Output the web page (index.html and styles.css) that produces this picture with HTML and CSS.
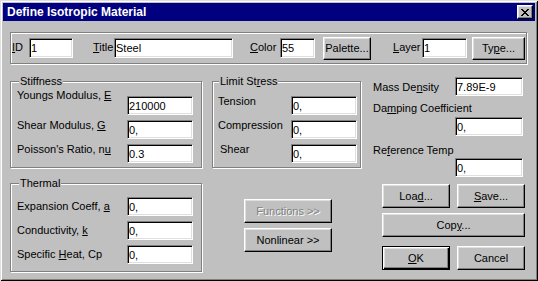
FILE: index.html
```html
<!DOCTYPE html>
<html lang="en">
<head>
    <meta charset="UTF-8">
    <title>Define Isotropic Material</title>
    <link rel="stylesheet" href="styles.css">
</head>
<body>

    <div class="window">

        <div class="titlebar">
            <span>Define Isotropic Material</span>
            <button class="close">
                <svg width="8" height="7" viewBox="0 0 8 7" shape-rendering="crispEdges">
                    <path d="M0 0h2v1h-2zM6 0h2v1h-2zM1 1h2v1h-2zM5 1h2v1h-2zM2 2h4v1h-4zM3 3h2v1h-2zM2 4h4v1h-4zM1 5h2v1h-2zM5 5h2v1h-2zM0 6h2v1h-2zM6 6h2v1h-2z" fill="#000"/>
                </svg>
            </button>
        </div>

        <div class="content">

            <div class="group top-group">
                <span class="lbl l-id"><u>I</u>D</span>
                <input class="field f-id" value="1">
                <span class="lbl l-title"><u>T</u>itle</span>
                <input class="field f-title" value="Steel">
                <span class="lbl l-color"><u>C</u>olor</span>
                <input class="field f-color" value="55">
                <button class="btn b-palette">Palette...</button>
                <span class="lbl l-layer"><u>L</u>ayer</span>
                <input class="field f-layer" value="1">
                <button class="btn b-type">Ty<u>p</u>e...</button>
            </div>

            <div class="lower">

                <div class="col-left">
                    <div class="group stiffness">
                        <div class="legend">Stiffness</div>
                        <div class="rows">
                            <span class="lbl up">Youngs Modulus, <u>E</u></span>
                            <input class="field" value="210000">
                            <span class="lbl">Shear Modulus, <u>G</u></span>
                            <input class="field" value="0,">
                            <span class="lbl">Poisson's Ratio, n<u>u</u></span>
                            <input class="field" value="0.3">
                        </div>
                    </div>

                    <div class="group thermal">
                        <div class="legend">Thermal</div>
                        <div class="rows">
                            <span class="lbl">Expansion Coeff, <u>a</u></span>
                            <input class="field" value="0,">
                            <span class="lbl">Conductivity, <u>k</u></span>
                            <input class="field" value="0,">
                            <span class="lbl">Specific <u>H</u>eat, Cp</span>
                            <input class="field" value="0,">
                        </div>
                    </div>
                </div>

                <div class="col-mid">
                    <div class="group limit">
                        <div class="legend">Limit St<u>r</u>ess</div>
                        <div class="rows">
                            <span class="lbl">Tension</span>
                            <input class="field" value="0,">
                            <span class="lbl">Compression</span>
                            <input class="field" value="0,">
                            <span class="lbl shear">Shear</span>
                            <input class="field" value="0,">
                        </div>
                    </div>
                    <button class="btn wide disabled">Functions &gt;&gt;</button>
                    <button class="btn wide">Nonlinear &gt;&gt;</button>
                </div>

                <div class="col-right">
                    <div class="mass-row">
                        <span>Mass De<u>n</u>sity</span>
                        <input class="field r-field" value="7.89E-9">
                    </div>
                    <span class="r-lbl">Da<u>m</u>ping Coefficient</span>
                    <input class="field r-field damp" value="0,">
                    <span class="r-lbl ref">Re<u>f</u>erence Temp</span>
                    <input class="field r-field temp" value="0,">

                    <div class="btn-row">
                        <button class="btn half">Loa<u>d</u>...</button>
                        <button class="btn half"><u>S</u>ave...</button>
                    </div>
                    <button class="btn copy">Cop<u>y</u>...</button>
                    <div class="btn-row ok-row">
                        <button class="btn half default"><u>O</u>K</button>
                        <button class="btn half">Cancel</button>
                    </div>
                </div>

            </div>

        </div>

    </div>

</body>
</html>
```

FILE: styles.css
```css
body{
    margin: 0;
    background: #c0c0c0;
}

.window{
    width: 538px;
    height: 281px;
    box-sizing: border-box;
    padding: 3px;
    background: #c0c0c0;
    font: 11px "Liberation Sans", Arial, sans-serif;
    color: #000;
    box-shadow: inset 1px 1px #dfdfdf, inset -1px -1px #000, inset 2px 2px #fff, inset -2px -2px #808080;
}

.titlebar{
    height: 18px;
    display: flex;
    align-items: center;
    padding-left: 4px;
    background: #000080;
    color: #fff;
    font-weight: bold;
    font-size: 12px;
}

.close{
    margin-left: auto;
    margin-right: 2px;
    width: 16px;
    height: 14px;
    padding: 0;
    box-sizing: border-box;
    display: flex;
    align-items: center;
    justify-content: center;
    background: #c0c0c0;
    border: 1px solid;
    border-color: #fff #000 #000 #fff;
    box-shadow: inset -1px -1px #808080, inset 1px 1px #dfdfdf;
}

.content{
    padding: 11px 8px 0 7px;
}

/* etched group box */
.group{
    box-sizing: border-box;
    border: 1px solid #808080;
    box-shadow: 1px 1px #fff, inset 1px 1px #fff;
}

.legend{
    width: max-content;
    margin-top: -7px;
    margin-left: 2px;
    padding: 0 1px;
    line-height: 13px;
    background: #c0c0c0;
}

.lbl{
    line-height: 13px;
}

.field{
    box-sizing: border-box;
    height: 19px;
    margin: 0;
    padding: 0 1px;
    border: 1px solid;
    border-color: #808080 #fff #fff #808080;
    box-shadow: inset 1px 1px #000, inset -1px -1px #dfdfdf;
    background: #fff;
    font: inherit;
    color: #000;
    outline: none;
}

.btn{
    box-sizing: border-box;
    height: 24px;
    padding: 0;
    border: 1px solid;
    border-color: #fff #000 #000 #fff;
    box-shadow: inset -1px -1px #808080, inset 1px 1px #dfdfdf;
    background: #c0c0c0;
    font: inherit;
    color: #000;
}

.btn.default{
    border-color: #000;
    box-shadow: inset 1px 1px #fff, inset -1px -1px #000, inset -2px -2px #808080, inset 2px 2px #dfdfdf;
}

.btn.disabled{
    color: #808080;
    text-shadow: 1px 1px #fff;
}

/* top row */
.top-group{
    height: 32px;
    display: flex;
    align-items: center;
    padding-left: 1px;
}

.top-group .lbl{
    margin-top: -2px;
}

.top-group .field{
    height: 20px;
}

.top-group .btn{
    height: 23px;
}

.l-id{ width: 17px; }
.f-id{ width: 44px; }
.l-title{ width: 21px; margin-left: 20px; }
.f-title{ width: 119px; }
.l-color{ width: 30px; margin-left: 17px; }
.f-color{ width: 35px; }
.b-palette{ width: 48px; margin-left: 8px; }
.l-layer{ width: 29px; margin-left: 22px; }
.f-layer{ width: 45px; }
.b-type{ width: 53px; margin-left: 5px; }

/* lower part */
.lower{
    display: flex;
}

.col-left{
    width: 192px;
}

.stiffness, .thermal{
    padding-left: 6px;
}

.stiffness{
    margin-top: 17px;
    padding-bottom: 4px;
}

.thermal{
    margin-top: 15px;
    padding-bottom: 7px;
}

.rows{
    display: grid;
    grid-template-columns: 110px 66px;
    row-gap: 5px;
    margin-top: 8px;
}

.rows .lbl{
    align-self: start;
    margin-top: -1px;
}

.rows .lbl.up{
    margin-top: -7px;
}

.thermal .rows{
    margin-top: 7px;
}

.thermal .rows .lbl{
    align-self: center;
    margin-top: 0;
}

.col-mid{
    width: 149px;
    margin-left: 10px;
    display: flex;
    flex-direction: column;
}

.limit{
    margin-top: 17px;
    padding-left: 5px;
    padding-bottom: 4px;
}

.limit .legend{
    margin-left: 1px;
}

.limit .rows{
    grid-template-columns: 73px 66px;
}

.shear{
    padding-left: 2px;
}

.btn.wide{
    width: 88px;
    margin-left: 32px;
    margin-top: 5px;
}

.btn.wide.disabled{
    margin-top: 31px;
}

.col-right{
    flex: 1;
    margin-left: 12px;
    display: flex;
    flex-direction: column;
}

.mass-row{
    display: flex;
    align-items: center;
    justify-content: space-between;
    margin-top: 13px;
}

.r-field{
    width: 68px;
    margin-right: 4px;
}

.r-field.damp, .r-field.temp{
    align-self: flex-end;
}

.r-lbl{
    line-height: 13px;
    margin-top: 6px;
}

.r-field.damp{
    margin-top: 2px;
}

.r-lbl.ref{
    margin-top: 8px;
}

.r-field.temp{
    margin-top: 1px;
}

.btn-row{
    display: flex;
    gap: 7px;
    padding-left: 9px;
    margin-top: 7px;
}

.btn.half{
    width: 68px;
}

.btn.copy{
    width: 143px;
    margin-left: 9px;
    margin-top: 5px;
}

.ok-row{
    margin-top: 9px;
}
```
